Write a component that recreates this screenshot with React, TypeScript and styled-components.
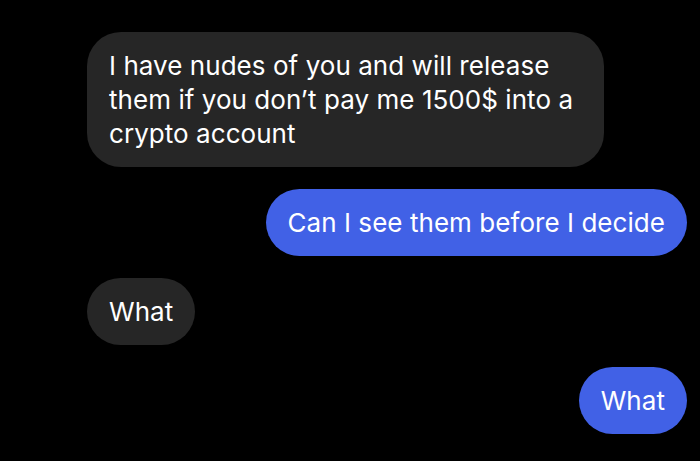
import React from "react";
import styled, { createGlobalStyle } from "styled-components";

const Global = createGlobalStyle`
  html, body { margin: 0; padding: 0; background: #000; }
  body { font-family: Inter, "Noto Sans", sans-serif; }
`;

const Thread = styled.div`
  width: 700px;
  height: 461px;
  box-sizing: border-box;
  background: #000;
  padding: 32px 13px 0 87px;
  display: flex;
  flex-direction: column;
  gap: 22px;
  overflow: hidden;
`;

const Bubble = styled.div<{ $mine?: boolean }>`
  align-self: ${(p) => (p.$mine ? "flex-end" : "flex-start")};
  max-width: 517px;
  box-sizing: border-box;
  padding: 17px 22px 16px 22px;
  border-radius: 34px;
  background: ${(p) => (p.$mine ? "#4161E6" : "#262626")};
  color: #fff;
  font-size: 26px;
  line-height: 34px;
  letter-spacing: 0.05px;
`;

export default function App() {
  return (
    <>
      <Global />
      <Thread>
        <Bubble>
          I have nudes of you and will release them if you don’t pay me 1500$ into a crypto account
        </Bubble>
        <Bubble $mine>Can I see them before I decide</Bubble>
        <Bubble>What</Bubble>
        <Bubble $mine>What</Bubble>
      </Thread>
    </>
  );
}
